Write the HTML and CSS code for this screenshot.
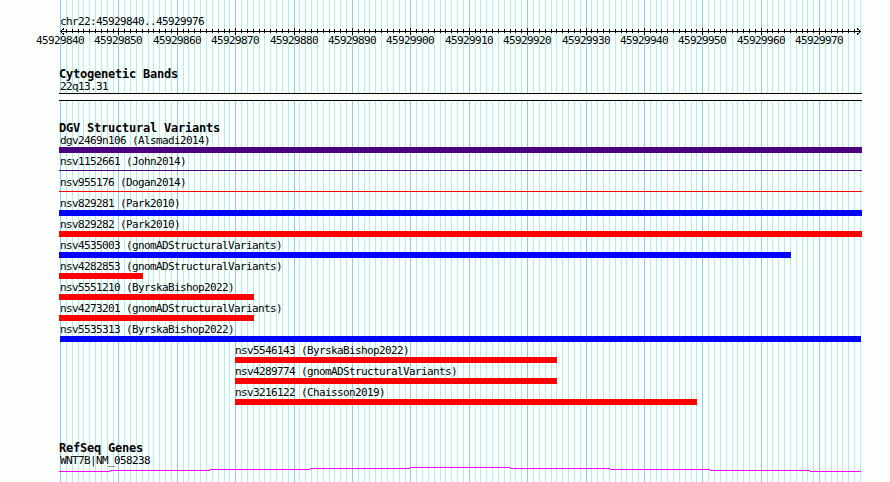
FILE: index.html
```html
<!DOCTYPE html>
<html lang="en">
<head>
    <meta charset="UTF-8">
    <meta name="viewport" content="width=device-width, initial-scale=1.0">
    <title>chr22:45929840..45929976</title>
    <link rel="stylesheet" href="styles.css">
</head>
<body>
    <svg class="grid" id="grid" width="890" height="482"></svg>

    <div class="browser">
        <div class="label">chr22:45929840..45929976</div>
        <svg class="ruler" id="ruler" width="890" height="19"></svg>

        <div class="track">
            <h2>Cytogenetic Bands</h2>
            <div class="label">22q13.31</div>
            <div class="band"></div>
        </div>

        <div class="track">
            <h2>DGV Structural Variants</h2>
            <div class="variants" id="variants"></div>
        </div>

        <div class="track genes">
            <h2>RefSeq Genes</h2>
            <div class="label">WNT7B|NM_058238</div>
            <svg class="gene" width="890" height="5">
                <path d="M59 4.5H110M110 3.5H210M210 2.5H310M310 1.5H410M410 .5H510M510 1.5H610M610 2.5H710M710 3.5H810M810 4.5H861"/>
            </svg>
        </div>
    </div>

    <script>
        const first = 45929840;
        const bases = 137;
        const left = 60;
        const step = 800 / bases;

        function xPos(i) {
            return Math.round(left + i * step);
        }

        // Grid lines and ruler ticks
        let minor = '';
        let major = '';
        let ticks = '';
        let numbers = '';
        for (let i = 0; i <= bases; i++) {
            const x = xPos(i) + 0.5;
            if (i % 10 === 0) {
                major += `M${x} 0V482`;
                if (i > 0) ticks += `M${x} 0V7`;
                numbers += `<text x="${x - 24.5}" y="16">${first + i}</text>`;
            } else {
                minor += `M${x} 0V482`;
                if (i < bases) ticks += `M${x} 1V5`;
            }
        }
        document.getElementById('grid').innerHTML =
            `<path class="minor" d="${minor}"/><path class="major" d="${major}"/>`;
        document.getElementById('ruler').innerHTML =
            `<path d="M60 3.5H861${ticks}"/>
             <path class="arrow" d="M64 0.5L60.5 3.5L64 6.5M857 0.5L860.5 3.5L857 6.5"/>${numbers}`;

        // name, bar start, bar end, colour class
        const variants = [
            ['dgv2469n106 (Alsmadi2014)', 59, 862, 'complex'],
            ['nsv1152661 (John2014)', 59, 862, 'complex thin'],
            ['nsv955176 (Dogan2014)', 59, 862, 'loss thin'],
            ['nsv829281 (Park2010)', 59, 862, 'gain'],
            ['nsv829282 (Park2010)', 59, 862, 'loss'],
            ['nsv4535003 (gnomADStructuralVariants)', 59, 791, 'gain'],
            ['nsv4282853 (gnomADStructuralVariants)', 59, 143, 'loss'],
            ['nsv5551210 (ByrskaBishop2022)', 59, 254, 'loss'],
            ['nsv4273201 (gnomADStructuralVariants)', 59, 254, 'loss'],
            ['nsv5535313 (ByrskaBishop2022)', 60, 861, 'gain'],
            ['nsv5546143 (ByrskaBishop2022)', 235, 557, 'loss'],
            ['nsv4289774 (gnomADStructuralVariants)', 235, 557, 'loss'],
            ['nsv3216122 (Chaisson2019)', 235, 697, 'loss']
        ];
        document.getElementById('variants').innerHTML = variants.map(([name, start, end, type]) => `
            <div class="variant">
                <div class="label" style="margin-left: ${Math.max(start, 60)}px">${name}</div>
                <div class="bar ${type}" style="margin-left: ${start}px; width: ${end - start}px"></div>
            </div>`).join('');
    </script>
</body>
</html>
```
FILE: styles.css
```css
body {
    margin: 0;
    background: #fdfffc;
    color: #000;
    font-family: 'DejaVu Sans Mono', monospace;
    font-size: 11px;
    overflow: hidden;
}
svg {
    display: block;
}
.grid {
    position: absolute;
    top: 0;
    left: 0;
}
.grid path {
    fill: none;
    stroke-width: 1;
    shape-rendering: crispEdges;
}
.grid .minor {
    stroke: #afeeee;
}
.grid .major {
    stroke: #87ceeb;
}
.browser {
    position: relative;
    width: 890px;
    height: 467px;
    padding-top: 15px;
}
.label {
    height: 13px;
    margin-left: 60px;
    line-height: 13px;
    letter-spacing: -0.622px;
    white-space: nowrap;
}
.ruler path {
    fill: none;
    stroke: #000;
    shape-rendering: crispEdges;
}
.ruler text {
    font-size: 11px;
    letter-spacing: -0.622px;
}
.track {
    margin-top: 20px;
}
h2 {
    height: 13px;
    margin: 0 0 0 59px;
    font-size: 12px;
    line-height: 14px;
    letter-spacing: -0.224px;
}
.band {
    box-sizing: border-box;
    width: 803px;
    height: 8px;
    margin-left: 59px;
    background: #fdfffc;
    border-top: 1px solid #000;
    border-bottom: 1px solid #000;
}
.variants {
    display: flex;
    flex-direction: column;
}
.variant {
    height: 21px;
}
.bar {
    height: 6px;
}
.bar.thin {
    height: 1px;
    margin-top: 2px;
}
.complex {
    background: #4b0082;
}
.gain {
    background: #0000ff;
}
.loss {
    background: #ff0000;
}
.genes {
    margin-top: 34px;
}
.gene path {
    fill: none;
    stroke: #ff00ff;
    shape-rendering: crispEdges;
}
```
